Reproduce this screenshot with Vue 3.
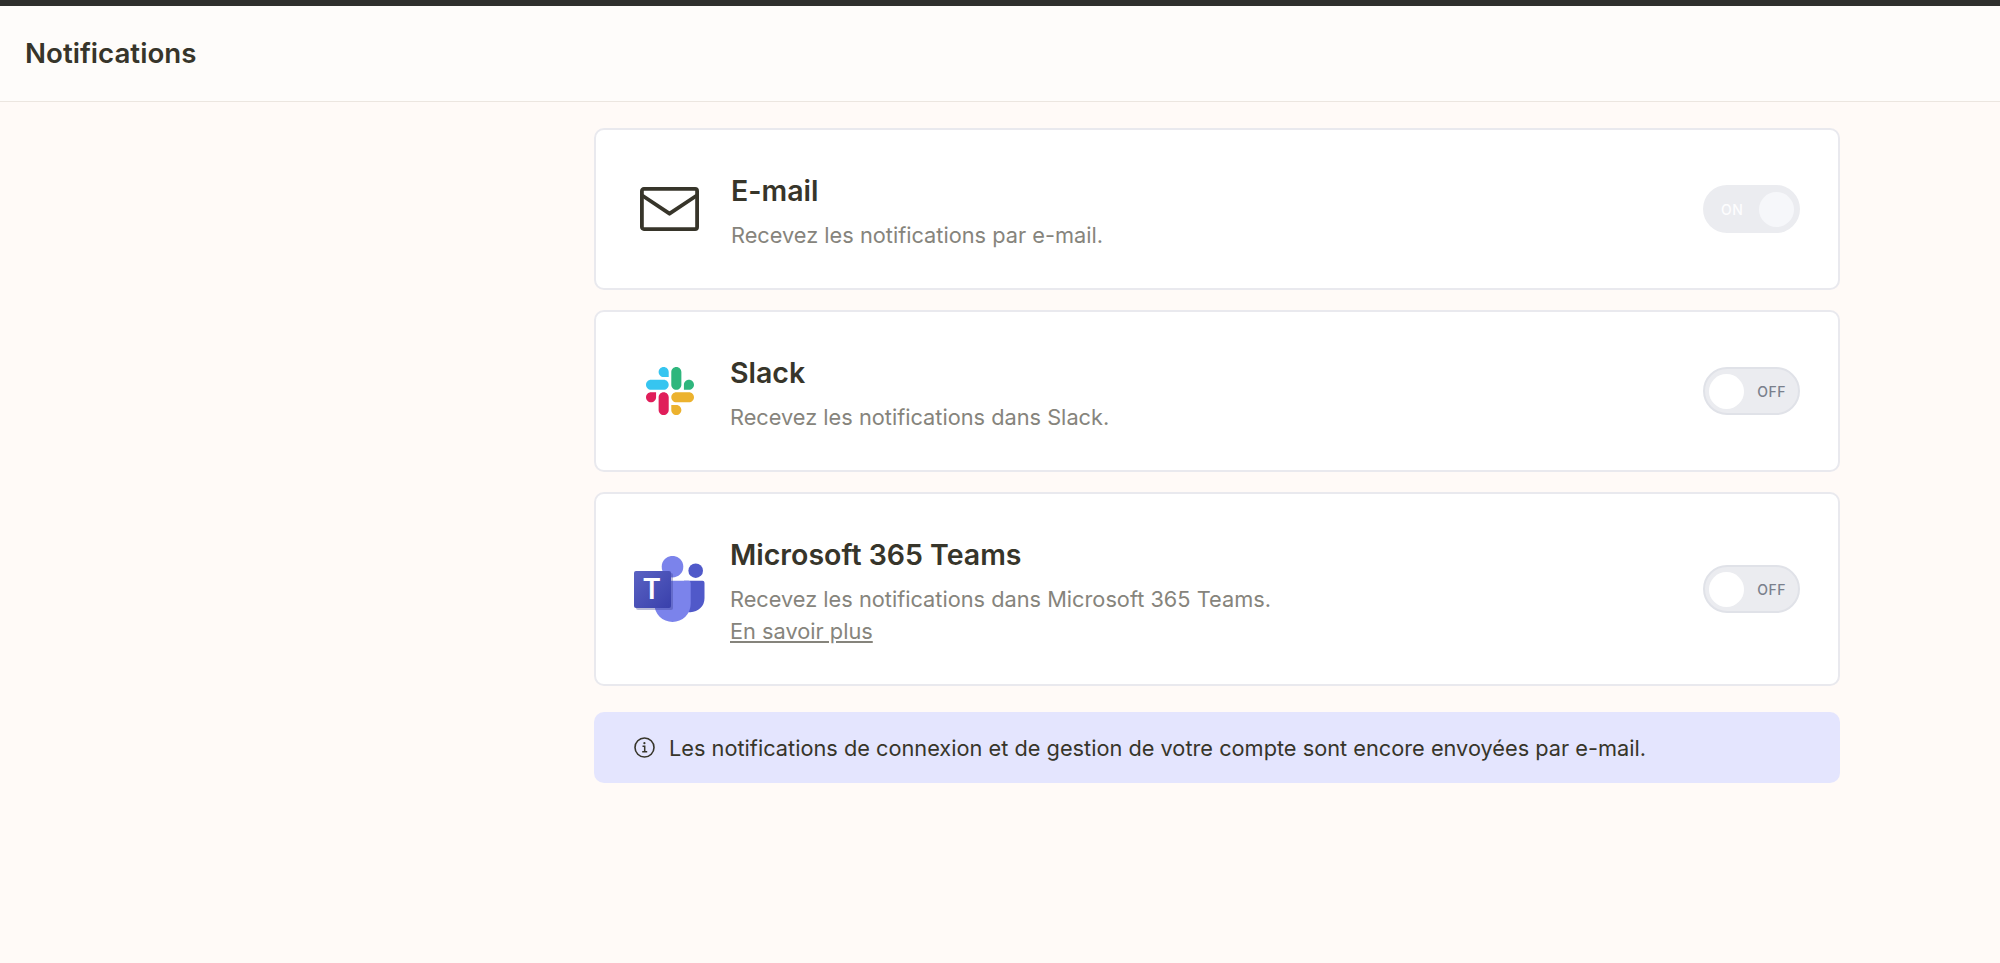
<script setup>
const channels = [
  { id: 'email', title: 'E-mail', text: 'Recevez les notifications par e-mail.', on: true },
  { id: 'slack', title: 'Slack', text: 'Recevez les notifications dans Slack.', on: false },
  { id: 'teams', title: 'Microsoft 365 Teams', text: 'Recevez les notifications dans Microsoft 365 Teams.', link: 'En savoir plus', on: false },
]
</script>

<template>
  <div class="page">
    <header class="top">
      <h1>Notifications</h1>
    </header>

    <main class="content">
      <section v-for="c in channels" :key="c.id" class="card">
        <div class="logo" :class="c.id">
          <svg v-if="c.id === 'email'" width="59" height="44" viewBox="0 0 59 44" fill="none" stroke="#37352a" stroke-width="3.800" stroke-linejoin="round" stroke-linecap="round">
            <rect x="1.900" y="1.900" width="55.200" height="40.200" rx="2" />
            <path d="M3 9 29.500 26.700 56 9" />
          </svg>
          <svg v-else-if="c.id === 'slack'" width="48" height="48" viewBox="0 0 122.800 122.800">
            <path d="M25.800 77.600c0 7.100-5.800 12.900-12.900 12.900S0 84.700 0 77.600s5.800-12.900 12.900-12.900h12.900v12.900zm6.500 0c0-7.100 5.800-12.900 12.900-12.900s12.900 5.800 12.900 12.900v32.300c0 7.100-5.800 12.900-12.900 12.900s-12.900-5.800-12.900-12.900V77.600z" fill="#e01e5a" />
            <path d="M45.200 25.800c-7.100 0-12.900-5.800-12.900-12.900S38.100 0 45.200 0s12.900 5.800 12.900 12.900v12.900H45.200zm0 6.500c7.100 0 12.900 5.800 12.900 12.900s-5.800 12.900-12.900 12.900H12.900C5.800 58.100 0 52.300 0 45.200s5.800-12.900 12.900-12.900h32.300z" fill="#36c5f0" />
            <path d="M97 45.200c0-7.100 5.800-12.900 12.900-12.900s12.900 5.800 12.900 12.900-5.800 12.900-12.900 12.900H97V45.200zm-6.500 0c0 7.100-5.800 12.900-12.900 12.900s-12.900-5.800-12.900-12.900V12.900C64.700 5.800 70.500 0 77.600 0s12.900 5.800 12.900 12.900v32.300z" fill="#2eb67d" />
            <path d="M77.600 97c7.100 0 12.900 5.800 12.900 12.900s-5.800 12.900-12.900 12.900-12.900-5.800-12.900-12.900V97h12.900zm0-6.500c-7.100 0-12.900-5.800-12.900-12.900s5.800-12.900 12.900-12.900h32.300c7.100 0 12.900 5.800 12.900 12.900s-5.800 12.900-12.900 12.900H77.600z" fill="#ecb22e" />
          </svg>
          <svg v-else width="71" height="66" viewBox="0 0 71 66">
            <defs>
              <linearGradient id="teams-square" x1="0" y1="0" x2="1" y2="1">
                <stop offset="0" stop-color="#5a62c3" />
                <stop offset="1" stop-color="#3940ab" />
              </linearGradient>
            </defs>
            <circle cx="61.700" cy="14.700" r="7.300" fill="#5059c9" />
            <path d="M50 24.700h18.500a2 2 0 0 1 2 2v15.500a14 14 0 0 1-14 14h-6.500z" fill="#5059c9" />
            <circle cx="38.500" cy="10.700" r="10.800" fill="#7b83eb" />
            <path d="M23 24.700h31.500a2.200 2.200 0 0 1 2.200 2.200v20.900a18.200 18.200 0 0 1-36.400 0v-20.400a2.700 2.700 0 0 1 2.700-2.700z" fill="#7b83eb" />
            <rect x="2" y="17" width="37" height="37" rx="2" fill="#3a3f8f" opacity=".35" />
            <rect x="0" y="15" width="37" height="37" rx="2" fill="url(#teams-square)" />
            <text x="17.700" y="42.500" text-anchor="middle" class="teams-t">T</text>
          </svg>
        </div>

        <div class="body">
          <h2>{{ c.title }}</h2>
          <p>{{ c.text }}</p>
          <a v-if="c.link" href="#" @click.prevent>{{ c.link }}</a>
        </div>

        <div class="toggle" :class="c.on ? 'on' : 'off'">
          <span class="label">{{ c.on ? 'ON' : 'OFF' }}</span>
          <span class="knob" />
        </div>
      </section>

      <div class="notice">
        <svg width="21" height="21" viewBox="0 0 21 21" fill="none" stroke="#37352a">
          <circle cx="10.500" cy="10.500" r="9.500" stroke-width="1.600" />
          <path d="M8.500 9.300h2.200v5.400M8.200 14.800h5" stroke-width="1.500" />
          <circle cx="10.400" cy="6.200" r="1.100" fill="#37352a" stroke="none" />
        </svg>
        <span>Les notifications de connexion et de gestion de votre compte sont encore envoyées par e-mail.</span>
      </div>
    </main>
  </div>
</template>

<style scoped>
.page {
  min-height: 963px;
  background: #fffaf7;
  border-top: 6px solid #2f2f2d;
  box-sizing: border-box;
  font-family: Inter, "Noto Sans", sans-serif;
  color: #37352a;
}

.top {
  height: 96px;
  box-sizing: border-box;
  display: flex;
  align-items: center;
  padding: 0 0 1px 25px;
  background: #fefcfa;
  border-bottom: 1px solid #ece6e0;
}

.top h1 {
  margin: 0;
  font-size: 27.700px;
  font-weight: 600;
}

.content {
  width: 1246px;
  margin-left: 594px;
  padding-top: 26px;
  display: flex;
  flex-direction: column;
  gap: 20px;
}

.card {
  display: flex;
  align-items: center;
  box-sizing: border-box;
  padding: 36px 38px;
  background: #fff;
  border: 2px solid #e9e9ee;
  border-radius: 10px;
}

.logo {
  width: 96px;
  flex: none;
  display: flex;
}

.logo.email {
  padding-left: 6px;
  width: 91px;
}

.logo.slack {
  padding-left: 12px;
  width: 84px;
}

.logo svg {
  display: block;
}

.teams-t {
  font-family: Inter, sans-serif;
  font-size: 28px;
  font-weight: 600;
  fill: #fff;
}

.body {
  flex: 1;
  min-width: 0;
  padding: 8px 0 1px;
}

.card h2 {
  margin: 0;
  font-size: 28.500px;
  line-height: 34px;
  font-weight: 600;
  color: #37352a;
}

.card p {
  margin: 11px 0 0;
  font-size: 21.750px;
  line-height: 32px;
  color: #86847c;
}

.card a {
  display: block;
  font-size: 21.750px;
  line-height: 32px;
  color: #86847c;
  text-decoration: underline;
}

.toggle {
  flex: none;
  width: 97px;
  height: 48px;
  box-sizing: border-box;
  border-radius: 24px;
  background: #ebecf0;
  display: flex;
  align-items: center;
  justify-content: space-between;
  font-size: 14px;
  font-weight: 500;
  letter-spacing: .5px;
}

.toggle.on {
  padding: 0 6px 0 18px;
}

.toggle.on .label {
  color: #fdfdfe;
}

.toggle.on .knob {
  background: #f6f7fa;
}

.toggle.off {
  flex-direction: row-reverse;
  padding: 0 12px 0 4px;
  border: 2px solid #e0e2e8;
}

.toggle.off .label {
  color: #7a808c;
}

.toggle.off .knob {
  background: #fff;
}

.knob {
  width: 35px;
  height: 35px;
  border-radius: 50%;
}

.notice {
  margin-top: 6px;
  height: 71px;
  display: flex;
  align-items: center;
  gap: 14px;
  padding-left: 40px;
  background: #e4e5fe;
  border-radius: 10px;
  font-size: 21.760px;
  color: #37352a;
}
</style>

<style>
html,
body {
  margin: 0;
  background: #fffaf7;
}
</style>
